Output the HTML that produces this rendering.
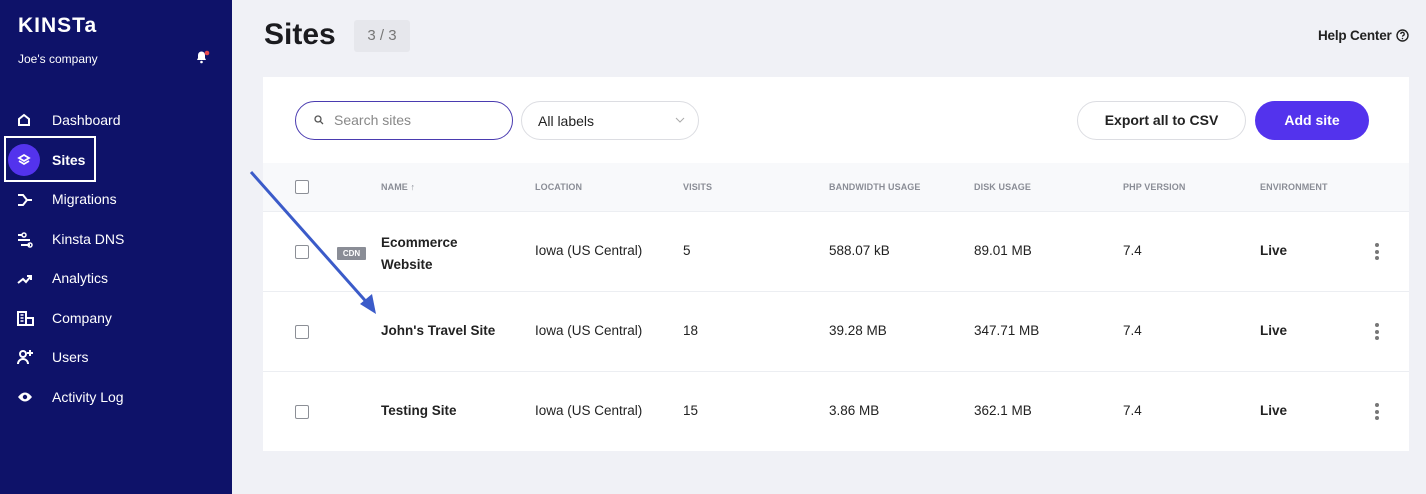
<!DOCTYPE html><html><head><style>
*{margin:0;padding:0;box-sizing:border-box}
body{width:1426px;height:494px;overflow:hidden;background:#f0f1f6;font-family:"Liberation Sans",Arial,sans-serif;position:relative;color:#111}
.sb{position:absolute;left:0;top:0;width:232px;height:494px;background:#0e1269;color:#fff}
.abs{position:absolute}
.nav{position:absolute;left:52px;font-size:14px;color:#fff}
.ic{position:absolute;left:17px}
.card{position:absolute;left:263px;top:77px;width:1146px;height:374px;background:#fff}
.hdr{position:absolute;left:0;top:86px;width:1146px;height:48px;background:#f8f9fb}
.th{position:absolute;top:105px;font-size:9px;font-weight:bold;color:#8a8d96;letter-spacing:.1px}
.row{position:absolute;left:0;width:1146px;height:80px;border-top:1px solid #eceef2}
.td{position:absolute;font-size:13.5px;color:#222}
.cb{position:absolute;left:32px;width:14px;height:14px;border:1.5px solid #8c8f96;border-radius:2px;background:#fff}
.dots{position:absolute;left:1112px;width:4px}
.dots i{display:block;width:4px;height:4px;border-radius:2px;background:#777;margin-bottom:2.5px}
</style></head><body>
<div class="sb">
<div class="abs" style="left:18px;top:14px;font-size:21px;font-weight:bold;letter-spacing:1px">KINSTa</div>
<div class="abs" style="left:18px;top:52px;font-size:12px">Joe's company</div>
<svg class="abs" style="left:195px;top:49px" width="16" height="16" viewBox="0 0 16 16"><path d="M2 11h9l-1-2V6a3.5 3.5 0 0 0-7 0v3z" fill="#fff"/><circle cx="6.5" cy="13" r="1.3" fill="#fff"/><circle cx="12" cy="4" r="2.3" fill="#e5484d"/></svg>
<div class="abs" style="left:4px;top:136px;width:92px;height:46px;border:2px solid #fff"></div>
<div class="abs" style="left:8px;top:144px;width:32px;height:32px;border-radius:50%;background:#5333ed"></div>
<svg class="abs" style="left:17px;top:153px" width="14" height="14" viewBox="0 0 14 14"><path d="M7 2 12 5 7 8 2 5z M2 8l5 3 5-3" fill="none" stroke="#fff" stroke-width="1.8"/></svg>
<svg class="ic" style="top:113px" width="14" height="14" viewBox="0 0 14 14"><path d="M2 12V6l5-4 5 4v6z" fill="none" stroke="#fff" stroke-width="2"/></svg>
<div class="nav" style="top:112px">Dashboard</div>
<div class="nav" style="top:152px;font-weight:bold">Sites</div>
<svg class="ic" style="top:193px" width="16" height="14" viewBox="0 0 16 14"><path d="M1 2h5l4 5-4 5H1M10 7h5" fill="none" stroke="#fff" stroke-width="2"/></svg>
<div class="nav" style="top:191px">Migrations</div>
<svg class="ic" style="top:232px" width="16" height="16" viewBox="0 0 16 16"><path d="M1 3h4M1 8h12M4 13h9" stroke="#fff" stroke-width="2"/><circle cx="7" cy="3" r="2" fill="none" stroke="#fff" stroke-width="1.5"/><circle cx="13" cy="13" r="2" fill="none" stroke="#fff" stroke-width="1.5"/></svg>
<div class="nav" style="top:231px">Kinsta DNS</div>
<svg class="ic" style="top:273px" width="16" height="12" viewBox="0 0 16 12"><path d="M1 10l5-4 3 3 5-6M10 3h4v4" fill="none" stroke="#fff" stroke-width="2"/></svg>
<div class="nav" style="top:270px">Analytics</div>
<svg class="ic" style="top:311px" width="17" height="15" viewBox="0 0 17 15"><path d="M1 1h8v13H1zM9 7h7v7H9" fill="none" stroke="#fff" stroke-width="2"/><path d="M3.5 4h3M3.5 7h3M3.5 10h3" stroke="#fff" stroke-width="1.5"/></svg>
<div class="nav" style="top:310px">Company</div>
<svg class="ic" style="top:349px" width="17" height="16" viewBox="0 0 17 16"><circle cx="6" cy="5" r="3" fill="none" stroke="#fff" stroke-width="2"/><path d="M1 15a5 5 0 0 1 10 0M13 1v6M10 4h6" fill="none" stroke="#fff" stroke-width="2"/></svg>
<div class="nav" style="top:349px">Users</div>
<svg class="ic" style="top:391px" width="16" height="12" viewBox="0 0 16 12"><path d="M1 6q7-9 14 0q-7 9-14 0z" fill="#fff"/><circle cx="8" cy="6" r="2.2" fill="#0e1269"/></svg>
<div class="nav" style="top:389px">Activity Log</div>
</div>
<div class="abs" style="left:264px;top:18px;font-size:30px;font-weight:bold;color:#1b1b1f">Sites</div>
<div class="abs" style="left:354px;top:20px;width:56px;height:32px;background:#e6e7ec;border-radius:3px;font-size:15px;color:#777;text-align:center;line-height:32px">3 / 3</div>
<div class="abs" style="left:1318px;top:28px;font-size:13.5px;font-weight:bold;color:#222;letter-spacing:-.2px">Help Center</div>
<svg class="abs" style="left:1396px;top:29px" width="13" height="13" viewBox="0 0 13 13"><circle cx="6.5" cy="6.5" r="5.5" fill="none" stroke="#222" stroke-width="1.4"/><path d="M4.8 5a1.7 1.7 0 1 1 2.3 1.6c-.5.2-.6.5-.6 1" fill="none" stroke="#222" stroke-width="1.3"/><circle cx="6.5" cy="9.5" r=".8" fill="#222"/></svg>
<div class="card">
<div class="abs" style="left:32px;top:24px;width:218px;height:39px;border:1.5px solid #4a3bb0;border-radius:20px"></div>
<svg class="abs" style="left:51px;top:38px" width="10" height="10" viewBox="0 0 10 10"><circle cx="4" cy="4" r="3" fill="none" stroke="#555" stroke-width="1.3"/><path d="M6.3 6.3 9 9" stroke="#555" stroke-width="1.3"/></svg>
<div class="abs" style="left:71px;top:35px;font-size:14px;color:#888">Search sites</div>
<div class="abs" style="left:258px;top:24px;width:178px;height:39px;border:1px solid #dcdde2;border-radius:20px"></div>
<div class="abs" style="left:275px;top:36px;font-size:14px;color:#222">All labels</div>
<svg class="abs" style="left:412px;top:40px" width="10" height="6" viewBox="0 0 10 6"><path d="M1 1l4 4 4-4" fill="none" stroke="#aaa" stroke-width="1"/></svg>
<div class="abs" style="left:814px;top:24px;width:169px;height:39px;border:1px solid #dcdde2;border-radius:20px;text-align:center;line-height:37px;font-size:14px;font-weight:bold;color:#222">Export all to CSV</div>
<div class="abs" style="left:992px;top:24px;width:114px;height:39px;background:#5333ed;border-radius:20px;text-align:center;line-height:39px;font-size:14px;font-weight:bold;color:#fff">Add site</div>
<div class="hdr"></div>
<div class="cb" style="top:103px"></div>
<div class="th" style="left:118px">NAME ↑</div>
<div class="th" style="left:272px">LOCATION</div>
<div class="th" style="left:420px">VISITS</div>
<div class="th" style="left:566px">BANDWIDTH USAGE</div>
<div class="th" style="left:711px">DISK USAGE</div>
<div class="th" style="left:860px">PHP VERSION</div>
<div class="th" style="left:997px">ENVIRONMENT</div>
<div class="row" style="top:134px">
<div class="cb" style="top:33px"></div>
<div class="abs" style="left:74px;top:35px;width:29px;height:13px;background:#8a8d96;color:#fff;font-size:8px;font-weight:bold;text-align:center;line-height:13px;border-radius:1px">CDN</div>
<div class="td" style="left:118px;top:20px;font-weight:bold;line-height:22px">Ecommerce<br>Website</div>
<div class="td" style="left:272px;top:31px">Iowa (US Central)</div><div class="td" style="left:420px;top:31px">5</div><div class="td" style="left:566px;top:31px">588.07 kB</div><div class="td" style="left:711px;top:31px">89.01 MB</div><div class="td" style="left:860px;top:31px">7.4</div><div class="td" style="left:997px;top:31px;font-weight:bold">Live</div>
<div class="dots" style="top:31px"><i></i><i></i><i></i></div></div>
<div class="row" style="top:214px">
<div class="cb" style="top:33px"></div>
<div class="td" style="left:118px;top:31px;font-weight:bold">John's Travel Site</div>
<div class="td" style="left:272px;top:31px">Iowa (US Central)</div><div class="td" style="left:420px;top:31px">18</div><div class="td" style="left:566px;top:31px">39.28 MB</div><div class="td" style="left:711px;top:31px">347.71 MB</div><div class="td" style="left:860px;top:31px">7.4</div><div class="td" style="left:997px;top:31px;font-weight:bold">Live</div>
<div class="dots" style="top:31px"><i></i><i></i><i></i></div></div>
<div class="row" style="top:294px">
<div class="cb" style="top:33px"></div>
<div class="td" style="left:118px;top:31px;font-weight:bold">Testing Site</div>
<div class="td" style="left:272px;top:31px">Iowa (US Central)</div><div class="td" style="left:420px;top:31px">15</div><div class="td" style="left:566px;top:31px">3.86 MB</div><div class="td" style="left:711px;top:31px">362.1 MB</div><div class="td" style="left:860px;top:31px">7.4</div><div class="td" style="left:997px;top:31px;font-weight:bold">Live</div>
<div class="dots" style="top:31px"><i></i><i></i><i></i></div></div>
</div>
<svg class="abs" style="left:0;top:0" width="1426" height="494"><path d="M251 172 370 306" stroke="#3b5bc9" stroke-width="3"/><path d="M376 314 360 304 372 294z" fill="#3b5bc9"/></svg>
</body></html>
